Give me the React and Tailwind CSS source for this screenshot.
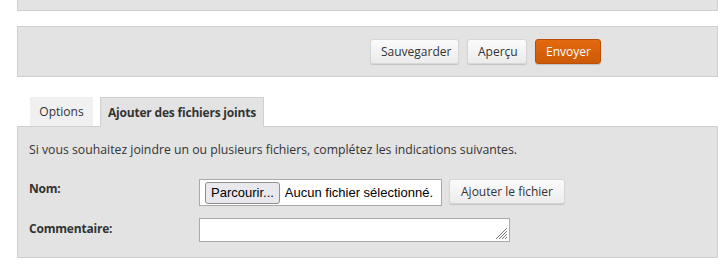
import React from 'react';

const sans = { fontFamily: '"Open Sans", "Noto Sans", sans-serif' };

function Button({ children, primary = false, className = '' }) {
    return (
        <button
            className={`h-[25px] rounded-[3px] border px-[10px] text-[12px] leading-none shadow-[0_1px_1px_rgba(0,0,0,0.15)] ${
                primary
                    ? 'border-[#b94f07] bg-gradient-to-b from-[#e4690f] to-[#cc5a06] text-white'
                    : 'border-[#d6d6d6] bg-gradient-to-b from-[#fbfbfb] to-[#ececec] text-[#333]'
            } ${className}`}
        >
            {children}
        </button>
    );
}

export default function App() {
    return (
        <div className="h-[273px] w-[718px] overflow-hidden bg-white text-[#333]" style={sans}>
            {/* bloc précédent, coupé en haut */}
            <div className="ml-[17px] h-[11px] border-x border-b border-[#d0d0d0] bg-[#e3e3e3]" />

            {/* barre d'actions */}
            <div className="ml-[17px] mt-[15px] flex h-[51px] items-center justify-end gap-[8px] border border-[#d0d0d0] bg-[#e3e3e3] pr-[116px]">
                <Button className="w-[89px]">Sauvegarder</Button>
                <Button className="w-[60px]">Aperçu</Button>
                <Button primary className="w-[66px]">Envoyer</Button>
            </div>

            {/* onglets */}
            <div className="ml-[17px] mt-[20px] flex items-end gap-[7px] pl-[13px]">
                <div className="flex h-[29px] w-[63px] items-center justify-center bg-[#f0f0f0] text-[12px]">Options</div>
                <div className="relative -mb-px flex h-[30px] w-[164px] items-center justify-center border border-b-0 border-[#d0d0d0] bg-[#e3e3e3] text-[12px] font-bold tracking-[-0.2px]">
                    Ajouter des fichiers joints
                </div>
            </div>

            {/* contenu de l'onglet */}
            <div className="ml-[17px] h-[132px] border border-[#d0d0d0] bg-[#e3e3e3] px-[11px] pt-[15px] text-[12px]">
                <p className="text-[12.25px] leading-[16px]">
                    Si vous souhaitez joindre un ou plusieurs fichiers, complétez les indications suivantes.
                </p>

                <div className="mt-[21px] flex items-start">
                    <label className="w-[170px] pt-[1px] font-bold tracking-[-0.2px]">Nom:</label>
                    <div
                        className="flex h-[27px] w-[243px] items-center border border-[#a9a9a9] bg-white pl-[5px] text-[13px]"
                        style={{ fontFamily: '"Liberation Sans", Arial, sans-serif' }}
                    >
                        <span className="flex h-[22px] items-center rounded-[3px] border border-[#8f8f8f] bg-[#e9e9ed] px-[5px] text-black">
                            Parcourir...
                        </span>
                        <span className="ml-[5px] text-black">Aucun fichier sélectionné.</span>
                    </div>
                    <Button className="ml-[7px] h-[23px] w-[116px] px-0 text-[12px]">Ajouter le fichier</Button>
                </div>

                <div className="mt-[12px] flex items-start">
                    <label className="w-[170px] pt-[2px] font-bold tracking-[-0.2px]">Commentaire:</label>
                    <div className="relative h-[24px] w-[311px] border border-[#a9a9a9] bg-white">
                        <svg className="absolute bottom-[1px] right-[1px]" width="13" height="13" viewBox="0 0 13 13">
                            <path d="M12 1 L1 12 M12 4 L4 12 M12 7 L7 12 M12 10 L10 12" stroke="#777" strokeWidth="1" />
                        </svg>
                    </div>
                </div>
            </div>
        </div>
    );
}
